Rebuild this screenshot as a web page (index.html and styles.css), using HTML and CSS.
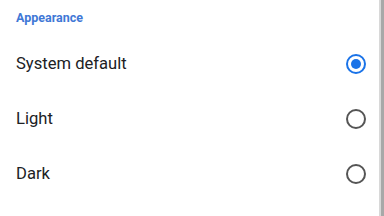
FILE: index.html
```html
<!DOCTYPE html>
<html lang="en">
<head>
    <meta charset="UTF-8">
    <meta name="viewport" content="width=device-width, initial-scale=1.0">
    <title>Appearance</title>
    <link rel="stylesheet" href="styles.css">
</head>
<body>
    <div class="settings">
        <div class="section-title">Appearance</div>

        <label class="option">
            <span class="option-label">System default</span>
            <span class="radio checked"></span>
        </label>
        <label class="option">
            <span class="option-label">Light</span>
            <span class="radio"></span>
        </label>
        <label class="option">
            <span class="option-label">Dark</span>
            <span class="radio"></span>
        </label>
    </div>
    <div class="scrollbar"></div>
</body>
</html>
```

FILE: styles.css
```css
* {
    margin: 0;
    padding: 0;
    box-sizing: border-box;
}

body {
    font-family: Roboto, "Noto Sans", sans-serif;
    background: #fff;
    width: 384px;
    height: 216px;
    display: flex;
    overflow: hidden;
}

.settings {
    flex: 1;
    display: flex;
    flex-direction: column;
}

.section-title {
    height: 36px;
    padding: 10px 16px 0;
    font-size: 12.5px;
    font-weight: 700;
    color: #3f78d6;
}

.option {
    height: 55px;
    padding: 0 13px 0 16px;
    display: flex;
    align-items: center;
    justify-content: space-between;
}

.option-label {
    font-size: 16.6px;
    color: #202124;
}

.radio {
    width: 20px;
    height: 20px;
    border: 2px solid #555;
    border-radius: 50%;
    display: flex;
    align-items: center;
    justify-content: center;
}

.radio.checked {
    border-color: #1a73e8;
}

.radio.checked::after {
    content: "";
    width: 10px;
    height: 10px;
    border-radius: 50%;
    background: #1a73e8;
}

.scrollbar {
    width: 5px;
    background: #a8a8a8;
    border-left: 2px solid #d8d8d8;
}
```
